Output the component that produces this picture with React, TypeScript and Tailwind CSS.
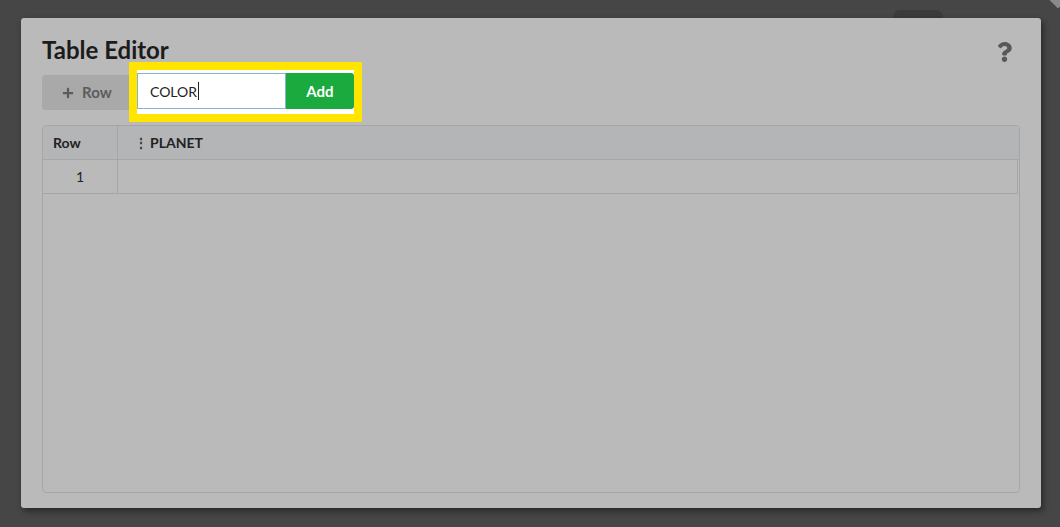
import React from 'react';
import { FaQuestion, FaPlus } from 'react-icons/fa';

function App() {
  return (
    <div className="relative w-[1060px] h-[527px] overflow-hidden bg-[#464646]" style={{ fontFamily: 'Lato, "Open Sans", sans-serif' }}>
      {/* stuff behind the dialog */}
      <div className="absolute left-[893px] top-[10px] w-[50px] h-[14px] rounded-full bg-[#3b3b3b]"></div>
      <div className="absolute left-[1052px] top-[-6px] w-[12px] h-[12px] rotate-45 bg-[#8a8a8a]"></div>

      <div className="relative ml-[21px] mt-[18px] w-[1020px] h-[490px] bg-[#bababa] rounded-[3px] shadow-[2px_3px_6px_rgba(0,0,0,0.45)] px-[21px] pt-[18px] pb-[15px] flex flex-col">
        <div className="flex items-start justify-between">
          <h1 className="text-[24px] leading-[28px] font-bold text-[#1c1c1c]">Table Editor</h1>
          <FaQuestion className="mt-[6px] mr-[8px] w-[15px] h-[20px] text-[#585858]" />
        </div>

        <div className="relative mt-[11px] h-[35px]">
          <button className="h-[35px] w-[95px] rounded-[4px] bg-[#a9a9a9] text-[#5c5c5c] text-[15px] font-bold flex items-center pl-[20px] gap-[8px]">
            <FaPlus className="w-[12px] h-[12px]" />
            Row
          </button>

          <div className="absolute left-[87px] top-[-13px] w-[233px] h-[60px] border-[8px] border-[#ffe500] bg-white py-[3px] flex">
            <div className="flex-1 h-[36px] border border-[#84b6d8] bg-white flex items-center pl-[12px] text-[14px] text-[#222]">
              COLOR<span className="inline-block w-[1px] h-[18px] bg-[#222] ml-[1px]"></span>
            </div>
            <button className="w-[68px] h-[36px] bg-[#1aaa3e] rounded-r-[3px] text-white text-[15px] font-bold">Add</button>
          </div>
        </div>

        <div className="mt-[15px] flex-1 border border-[#a6a6a6] rounded-[4px] overflow-hidden">
          <div className="flex h-[34px] bg-[#b4b5b7] border-b border-[#a6a6a6] text-[14px] font-bold text-[#222]">
            <div className="w-[75px] border-r border-[#a6a6a6] flex items-center pl-[10px]">Row</div>
            <div className="flex-1 flex items-center pl-[17px] gap-[3px]">
              <span className="text-[12px] font-bold leading-none text-[#333]">⋮</span>
              PLANET
            </div>
          </div>
          <div className="flex h-[34px] border-b border-[#a6a6a6] mr-[1px] border-r text-[14px] text-[#222]">
            <div className="w-[75px] border-r border-[#a6a6a6] flex items-center justify-center">1</div>
            <div className="flex-1"></div>
          </div>
        </div>
      </div>
    </div>
  );
}

export default App;
